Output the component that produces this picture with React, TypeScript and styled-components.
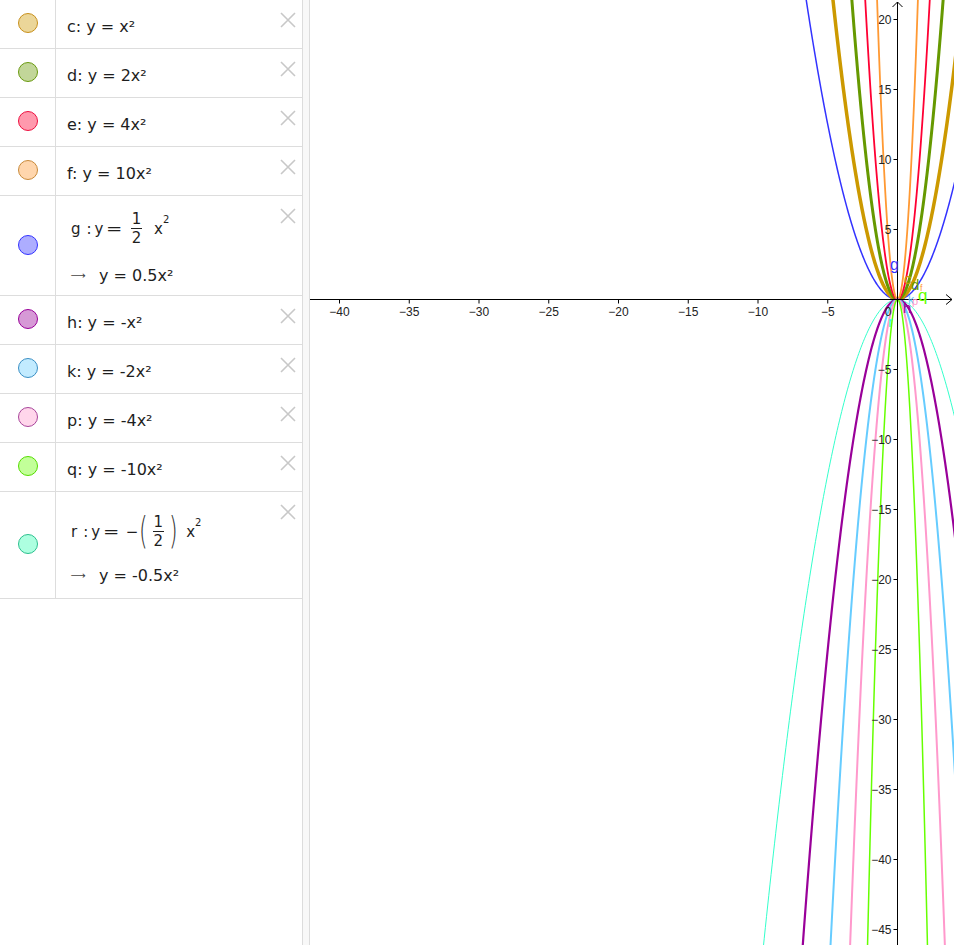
import React from 'react';
import styled, { createGlobalStyle } from 'styled-components';

const GlobalStyle = createGlobalStyle`
  html, body {
    margin: 0;
    padding: 0;
    background: #fff;
  }
  body {
    font-family: "DejaVu Sans", sans-serif;
    overflow: hidden;
  }
`;

const Page = styled.div`
  display: flex;
  width: 954px;
  height: 945px;
  overflow: hidden;
  background: #fff;
`;

const AlgebraPanel = styled.div`
  width: 302px;
  flex-shrink: 0;
  display: flex;
  flex-direction: column;
`;

const Divider = styled.div`
  width: 6px;
  flex-shrink: 0;
  border-left: 1px solid #dcdcdc;
  border-right: 1px solid #dcdcdc;
  background: #f8f8f8;
`;

const GraphPanel = styled.div`
  flex: 1;
  overflow: hidden;
  svg {
    display: block;
  }
`;

const Row = styled.div<{ $h: number }>`
  display: flex;
  height: ${(p) => p.$h}px;
  border-bottom: 1px solid #dddddd;
`;

const MarbleCell = styled.div<{ $shift: number }>`
  width: 56px;
  flex-shrink: 0;
  border-right: 1px solid #dddddd;
  display: flex;
  align-items: center;
  justify-content: center;
  padding-bottom: ${(p) => p.$shift}px;
  box-sizing: border-box;
`;

const Marble = styled.div<{ $color: string; $fill: string }>`
  width: 18px;
  height: 18px;
  border-radius: 50%;
  border: 1px solid ${(p) => p.$color};
  background: ${(p) => p.$fill};
`;

const Content = styled.div`
  flex: 1;
  display: flex;
  flex-direction: column;
  justify-content: center;
  padding: 4px 0 0 11px;
  font-size: 16px;
  color: #1e1e1e;
  white-space: pre;
`;

const FormulaContent = styled.div<{ $top: number }>`
  flex: 1;
  display: flex;
  flex-direction: column;
  padding: ${(p) => p.$top}px 0 0 15px;
  color: #1e1e1e;
`;

const Formula = styled.div<{ $h: number }>`
  display: flex;
  align-items: center;
  height: ${(p) => p.$h}px;
  font-size: 15px;
  white-space: pre;
`;

const Op = styled.span<{ $l?: number; $r?: number; $wide?: boolean }>`
  display: inline-block;
  margin-left: ${(p) => p.$l ?? 0}px;
  margin-right: ${(p) => p.$r ?? 0}px;
  transform: ${(p) => (p.$wide ? 'scaleX(1.3)' : 'none')};
`;

const Frac = styled.span`
  display: inline-flex;
  flex-direction: column;
  align-items: center;
  line-height: 15px;
  margin: 0 4px;
`;

const FracBar = styled.span`
  width: 11px;
  height: 1px;
  background: #222;
  margin: 1px 0 2px;
`;

const Paren = styled.span`
  font-size: 37px;
  line-height: 40px;
  font-weight: 300;
  color: #333;
  display: inline-block;
  transform: scaleX(0.6);
  margin: 0 -2px;
`;

const Pow = styled.span`
  position: relative;
  display: inline-block;
  margin-left: 8px;
`;

const Sup = styled.span`
  position: absolute;
  left: 100%;
  top: -6px;
  font-size: 10px;
`;

const ResultLine = styled.div<{ $gap: number }>`
  margin-top: ${(p) => p.$gap}px;
  font-size: 16px;
  line-height: 19px;
  white-space: pre;
  display: flex;
  align-items: center;
`;

const Arrow = styled.span`
  color: #444;
  font-size: 10px;
  width: 16px;
  margin-right: 12px;
  display: inline-block;
  transform: scaleX(1.05);
`;

const CloseButton = styled.button`
  align-self: flex-start;
  margin: 12px 6px 0 0;
  width: 16px;
  height: 16px;
  padding: 0;
  border: none;
  background: transparent;
  flex-shrink: 0;
  svg {
    display: block;
  }
`;

const mix = (hex: string) => {
  const n = parseInt(hex.slice(1), 16);
  const ch = [(n >> 16) & 255, (n >> 8) & 255, n & 255].map((c) =>
    Math.round(255 - 0.4 * (255 - c))
  );
  return `rgb(${ch.join(',')})`;
};

const Close = () => (
  <CloseButton>
    <svg width="16" height="16" viewBox="0 0 16 16">
      <path d="M1 1 L15 15 M15 1 L1 15" stroke="#c8c8c8" strokeWidth="1.6" />
    </svg>
  </CloseButton>
);

type Fn = {
  name: string;
  a: number;
  color: string;
  border: string;
  fill?: string;
  width: number;
  text?: string;
};

const fns: Fn[] = [
  { name: 'g', a: 0.5, color: '#3333ff', border: '#3333ff', width: 1.5 },
  { name: 'c', a: 1, color: '#cc9900', border: '#c8901c', width: 3.5, text: 'c: y = x²' },
  { name: 'd', a: 2, color: '#669900', border: '#6a9a10', width: 3, text: 'd: y = 2x²' },
  { name: 'e', a: 4, color: '#ff0033', border: '#ee1040', width: 1.8, text: 'e: y = 4x²' },
  { name: 'f', a: 10, color: '#ff9933', border: '#c98a3a', width: 1.8, text: 'f: y = 10x²' },
  { name: 'r', a: -0.5, color: '#33ffcc', border: '#2cc08e', width: 1, fill: 'rgb(173,255,224)' },
  { name: 'h', a: -1, color: '#990099', border: '#990099', width: 2.2, text: 'h: y = -x²' },
  { name: 'k', a: -2, color: '#66ccff', border: '#3a8fc4', width: 2, text: 'k: y = -2x²' },
  { name: 'p', a: -4, color: '#ff99cc', border: '#a8449a', width: 2, text: 'p: y = -4x²' },
  { name: 'q', a: -10, color: '#66ff00', border: '#55dd00', width: 1.5, text: 'q: y = -10x²' },
];

const SX = 13.95;
const SY = 14;
const OX = 587.5;
const OY = 299.5;
const px = (x: number) => OX + x * SX;
const py = (y: number) => OY - y * SY;

const parabola = (a: number) => {
  const lim = a > 0 ? 24 : -48;
  const xm = Math.sqrt(lim / a);
  const pts: string[] = [];
  const n = 240;
  for (let i = 0; i <= n; i++) {
    const x = -xm + (2 * xm * i) / n;
    pts.push(`${px(x).toFixed(2)},${py(a * x * x).toFixed(2)}`);
  }
  return 'M' + pts.join(' L');
};

const labels = [
  { t: 'g', x: 580, y: 270, c: '#3333ff', s: 16 },
  { t: 'c', x: 594, y: 284, c: '#cc9900', s: 15 },
  { t: 'd', x: 601, y: 290, c: '#669900', s: 15 },
  { t: 'f', x: 610, y: 291, c: '#ff9933', s: 9 },
  { t: 'k', x: 598, y: 304, c: '#66ccff', s: 12 },
  { t: 'p', x: 602, y: 305, c: '#ff99cc', s: 11 },
  { t: 'q', x: 608, y: 301, c: '#66ff00', s: 17 },
  { t: 'h', x: 593, y: 313, c: '#990099', s: 15 },
  { t: 'r', x: 578, y: 327, c: '#33ffcc', s: 15 },
];

const xTicks = [-40, -35, -30, -25, -20, -15, -10, -5];
const yTicks = [20, 15, 10, 5, -5, -10, -15, -20, -25, -30, -35, -40, -45];
const fmt = (v: number) => (v < 0 ? `\u2212${-v}` : `${v}`);

const Graph = () => (
  <svg width="644" height="945" viewBox="0 0 644 945">
    {fns.map((f) => (
      <path
        key={f.name}
        d={parabola(f.a)}
        fill="none"
        stroke={f.color}
        strokeWidth={f.width}
        strokeLinejoin="round"
      />
    ))}
    <g stroke="#000" strokeWidth="1" fill="none">
      <path d={`M0 ${OY} L642 ${OY}`} />
      <path d={`M636 ${OY - 5} L642 ${OY} L636 ${OY + 5}`} />
      <path d={`M${OX} 945 L${OX} 2`} />
      <path d={`M${OX - 5} 7 L${OX} 2 L${OX + 5} 7`} />
      {xTicks.map((v) => (
        <path key={v} d={`M${px(v)} ${OY} L${px(v)} ${OY + 4}`} />
      ))}
      {yTicks.map((v) => (
        <path key={v} d={`M${OX - 4} ${py(v)} L${OX} ${py(v)}`} />
      ))}
    </g>
    <g fontFamily='"Liberation Sans", Arial, sans-serif' fontSize="12" fill="#222">
      {xTicks.map((v) => (
        <text key={v} x={px(v)} y={OY + 16.5} textAnchor="middle">
          {fmt(v)}
        </text>
      ))}
      {yTicks.map((v) => (
        <text key={v} x={OX - 6} y={py(v) + 4.3} textAnchor="end">
          {fmt(v)}
        </text>
      ))}
      <text x={OX - 6} y={OY + 16.5} textAnchor="end">
        0
      </text>
    </g>
    <g fontFamily='"Liberation Sans", Arial, sans-serif'>
      {labels.map((l) => (
        <text key={l.t} x={l.x} y={l.y} fill={l.c} fontSize={l.s}>
          {l.t}
        </text>
      ))}
    </g>
  </svg>
);

const SimpleRow = ({ f }: { f: Fn }) => (
  <Row $h={48}>
    <MarbleCell $shift={3}>
      <Marble $color={f.border} $fill={f.fill ?? mix(f.color)} />
    </MarbleCell>
    <Content>{f.text}</Content>
    <Close />
  </Row>
);

const App = () => {
  const byName = (n: string) => fns.find((f) => f.name === n)!;
  const g = byName('g');
  const r = byName('r');
  return (
    <Page>
      <GlobalStyle />
      <AlgebraPanel>
        {['c', 'd', 'e', 'f'].map((n) => (
          <SimpleRow key={n} f={byName(n)} />
        ))}
        <Row $h={99}>
          <MarbleCell $shift={2}>
            <Marble $color={g.border} $fill={mix(g.color)} />
          </MarbleCell>
          <FormulaContent $top={16}>
            <Formula $h={34}>
              <span>g</span>
              <Op $l={6} $r={3}>:</Op>
              <span>y</span>
              <Op $l={5} $r={6} $wide>=</Op>
              <Frac>
                <span>1</span>
                <FracBar />
                <span>2</span>
              </Frac>
              <Pow>
                x<Sup>2</Sup>
              </Pow>
            </Formula>
            <ResultLine $gap={20}>
              <Arrow>⟶</Arrow>
              <span>y = 0.5x²</span>
            </ResultLine>
          </FormulaContent>
          <Close />
        </Row>
        {['h', 'k', 'p', 'q'].map((n) => (
          <SimpleRow key={n} f={byName(n)} />
        ))}
        <Row $h={106}>
          <MarbleCell $shift={2}>
            <Marble $color={r.border} $fill={r.fill!} />
          </MarbleCell>
          <FormulaContent $top={20}>
            <Formula $h={40}>
              <span>r</span>
              <Op $l={6} $r={3}>:</Op>
              <span>y</span>
              <Op $l={5} $r={8} $wide>=</Op>
              <span>−</span>
              <Paren>(</Paren>
              <Frac>
                <span>1</span>
                <FracBar />
                <span>2</span>
              </Frac>
              <Paren>)</Paren>
              <Pow>
                x<Sup>2</Sup>
              </Pow>
            </Formula>
            <ResultLine $gap={14}>
              <Arrow>⟶</Arrow>
              <span>y = -0.5x²</span>
            </ResultLine>
          </FormulaContent>
          <Close />
        </Row>
      </AlgebraPanel>
      <Divider />
      <GraphPanel>
        <Graph />
      </GraphPanel>
    </Page>
  );
};

export default App;
